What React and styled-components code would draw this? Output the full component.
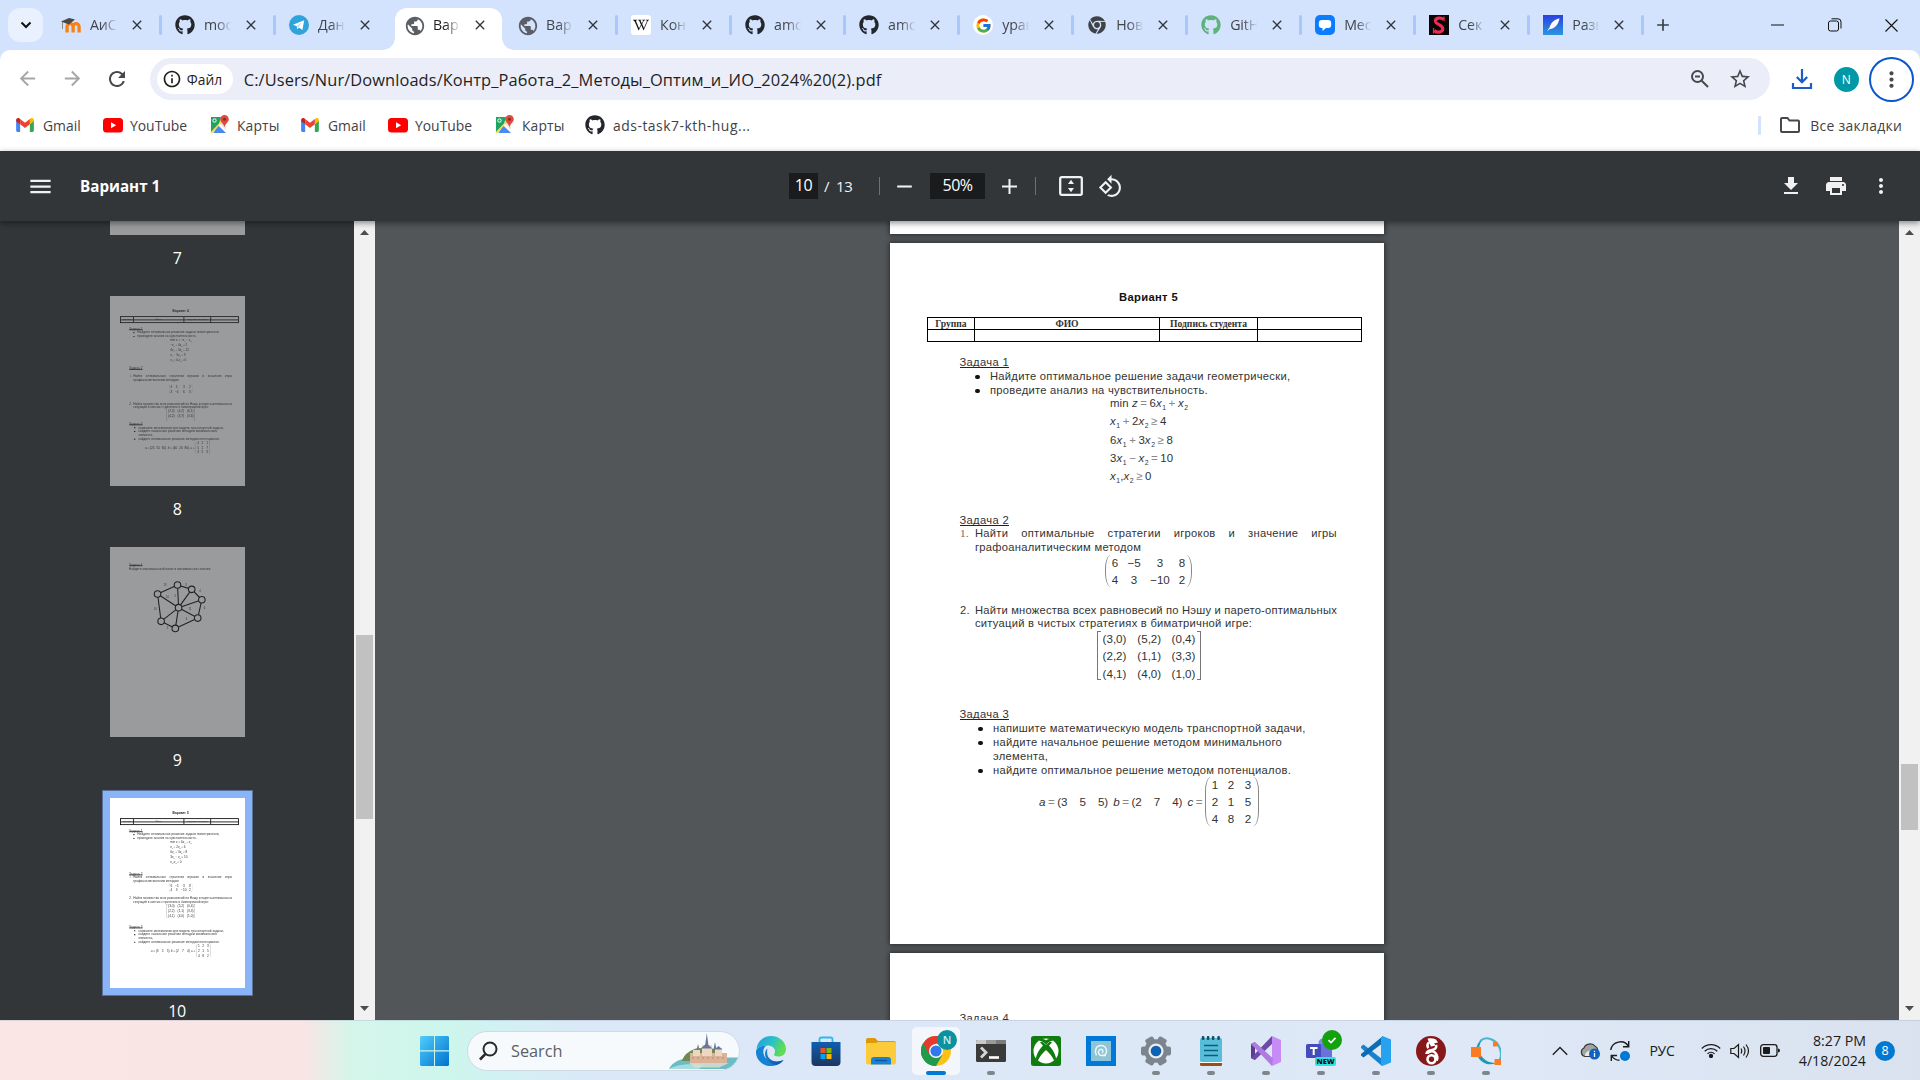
import React from "react";
import styled, { createGlobalStyle, css } from "styled-components";
import { FaGithub, FaChrome, FaWikipediaW } from "react-icons/fa";
import { FcGoogle } from "react-icons/fc";
import {
  MdArrowBack, MdArrowForward, MdRefresh, MdInfoOutline, MdStarBorder,
  MdPublic, MdClose, MdAdd, MdRemove, MdMenu, MdPrint, MdMoreVert,
} from "react-icons/md";

const Global = createGlobalStyle`
  * { box-sizing: border-box; }
  body { margin: 0; overflow: hidden; background: #fff; }
  svg { display: block; flex: none; }
`;

const UI = `"Open Sans", "Noto Sans", sans-serif`;
const DOC = `"Liberation Sans", sans-serif`;

const Screen = styled.div`
  width: 1920px;
  height: 1080px;
  display: flex;
  flex-direction: column;
  overflow: hidden;
  font-family: ${UI};
  color: #1f1f1f;
`;

/* ---------- tab strip ---------- */

const TabStrip = styled.div`
  height: 50px;
  flex: none;
  display: flex;
  align-items: center;
  background: #d3e2fd;
  padding-left: 8px;
`;
const TabSearch = styled.div`
  width: 35px;
  height: 34px;
  margin-right: 5px;
  border-radius: 12px;
  background: #e9f0fe;
  display: grid;
  place-items: center;
`;
const TabBox = styled.div`
  position: relative;
  width: 114.03px;
  height: 50px;
  flex: none;
  display: flex;
  align-items: center;
  padding-left: ${(p) => (p.$active ? 14 : 13)}px;
  &::after {
    content: "";
    margin-left: auto;
    width: 3px;
    height: 20px;
    border-radius: 2px;
    background: ${(p) => (p.$line ? "#a8c7fa" : "transparent")};
  }
  ${(p) =>
    p.$active &&
    css`
      &::before {
        content: "";
        position: absolute;
        left: -7px;
        top: 8px;
        width: 131px;
        height: 42px;
        background:
          radial-gradient(circle at 0 0, transparent 11.5px, #fff 12px) 0 30px / 12px 12px no-repeat,
          radial-gradient(circle at 100% 0, transparent 11.5px, #fff 12px) 119px 30px / 12px 12px no-repeat;
      }
    `}
`;
const TabFill = styled.div`
  position: absolute;
  left: 5px;
  top: 8px;
  width: 107px;
  height: 42px;
  border-radius: 12px 12px 0 0;
  background: #fff;
`;
const Favicon = styled.span`
  position: relative;
  width: 20px;
  height: 20px;
  margin-right: 9px;
  display: grid;
  place-items: center;
  background: ${(p) => p.$bg || "transparent"};
  border-radius: ${(p) => p.$r || 0}px;
`;
const TabTitle = styled.span`
  position: relative;
  width: 28px;
  overflow: hidden;
  white-space: nowrap;
  font-size: 14.2px;
  letter-spacing: -0.1px;
  line-height: 20px;
  color: ${(p) => (p.$active ? "#1f1f1f" : "#41454b")};
  mask-image: linear-gradient(90deg, #000 45%, transparent 98%);
`;
const TabClose = styled.span`
  position: relative;
  margin-left: 11px;
  color: #32363b;
`;
const NewTab = styled.div`
  margin-left: 9px;
  color: #3b3f44;
`;
const WindowButtons = styled.div`
  margin-left: auto;
  display: flex;
  height: 48px;
  align-items: center;
`;
const WindowButton = styled.div`
  width: 57px;
  display: grid;
  place-items: center;
`;

const Moodle = () => (
  <svg width="22" height="20" viewBox="0 0 22 20">
    <path d="M4.5 17V11.2a3 3 0 0 1 6 0V17M10.5 17v-5.800a3 3 0 0 1 6 0V17" transform="translate(1.600 .5)" fill="none" stroke="#f98012" strokeWidth="3.300" />
    <path d="M0 6.500 8 3l6 1.500-6 5z" fill="#4a4846" />
    <path d="M1.500 7v7" stroke="#8c8a87" strokeWidth="1" />
  </svg>
);
const Telegram = () => (
  <svg width="20" height="20" viewBox="0 0 20 20">
    <circle cx="10" cy="10" r="10" fill="#2fa3dc" />
    <path d="M4 9.800 15.200 5.300 13.400 15 9.900 12.500 8.200 14.200 7.800 11.300z" fill="#fff" />
    <path d="M7.800 11.300 13 7.200 9.300 12z" fill="#a9cfe6" />
  </svg>
);
const SAv = () => (
  <svg width="20" height="20" viewBox="0 0 20 20">
    <rect width="20" height="20" fill="#0a0506" />
    <path d="M14.500 4.500C11.500 1.800 6 3 6.500 6.500c.6 3.400 7.500 3.200 7.300 7.500-.2 3.500-5.800 4.300-8.600 1.500" fill="none" stroke="#ee2b55" strokeWidth="3.200" />
    <path d="M15 1.500v4.500M4.500 13v5.500" stroke="#ee2b55" strokeWidth="1.200" />
  </svg>
);
const Feather = () => (
  <svg width="20" height="20" viewBox="0 0 20 20">
    <defs>
      <linearGradient id="fth" x1="0" y1="0" x2="0" y2="1">
        <stop offset="0" stopColor="#2b3fe0" /><stop offset="1" stopColor="#2d96e0" />
      </linearGradient>
    </defs>
    <rect width="20" height="20" fill="url(#fth)" />
    <path d="M16.500 3.500C12 4 8 7.500 6.500 12.500L4 16l3-2c5-.2 8.500-5 9.500-10.500z" fill="#fff" />
  </svg>
);
const Bubble = () => (
  <svg width="20" height="20" viewBox="0 0 20 20">
    <rect width="20" height="20" rx="5" fill="#0a7cff" />
    <path d="M7 5h6a3.200 3.200 0 0 1 3.200 3.200v1.600A3.200 3.200 0 0 1 13 13h-2l-3.500 3V13H7a3.200 3.200 0 0 1-3.200-3.200V8.200A3.200 3.200 0 0 1 7 5z" fill="#fff" />
  </svg>
);

const tabs = [
  { t: "АиС", i: <Moodle />, line: 1 },
  { t: "moo", i: <FaGithub size={20} color="#23272d" />, line: 1 },
  { t: "Дан", i: <Telegram /> },
  { t: "Вар", i: <MdPublic size={22} color="#5b5f65" />, active: 1 },
  { t: "Вар", i: <MdPublic size={22} color="#5b5f65" />, line: 1 },
  { t: "Кон", i: <FaWikipediaW size={16} color="#111" />, bg: "#fff", r: 3, line: 1 },
  { t: "amo", i: <FaGithub size={20} color="#23272d" />, line: 1 },
  { t: "amo", i: <FaGithub size={20} color="#23272d" />, line: 1 },
  { t: "урав", i: <FcGoogle size={17} />, bg: "#fff", r: 10, line: 1 },
  { t: "Нов", i: <FaChrome size={18} color="#3f4348" />, line: 1 },
  { t: "GitH", i: <FaGithub size={20} color="#5eb37a" />, line: 1 },
  { t: "Мес", i: <Bubble />, line: 1 },
  { t: "Сек", i: <SAv />, line: 1 },
  { t: "Разв", i: <Feather />, line: 1 },
];

/* ---------- address bar ---------- */

const Chrome = styled.div`
  height: 101px;
  flex: none;
  background: linear-gradient(#d3e2fd, #d3e2fd) 0 0 / 100% 12px no-repeat;
`;
const ChromeInner = styled.div`
  height: 101px;
  background: #fff;
  border-radius: 10px 10px 0 0;
`;
const AddressRow = styled.div`
  height: 58px;
  display: flex;
  align-items: center;
  padding-left: 16px;
`;
const NavButton = styled.span`
  width: 44.6px;
  height: 24px;
  display: flex;
  color: ${(p) => (p.$on ? "#45484c" : "#a4a6a8")};
`;
const Omnibox = styled.div`
  width: 1620px;
  height: 42px;
  border-radius: 21px;
  background: #ebeef8;
  display: flex;
  align-items: center;
  padding: 0 18px 0 7px;
`;
const Chip = styled.div`
  width: 76px;
  height: 30px;
  border-radius: 15px;
  background: #fff;
  display: flex;
  align-items: center;
  gap: 5px;
  padding-left: 5px;
  font-size: 13.8px;
`;
const Url = styled.div`
  margin-left: 11px;
  font-size: 16.4px;
  letter-spacing: 0.1px;
  white-space: nowrap;
  flex: 1;
`;
const OmniIcons = styled.div`
  display: flex;
  gap: 18px;
  align-items: center;
  color: #45484c;
`;
const DownloadIcon = styled.svg`
  margin-left: 21px;
`;
const Avatar = styled.div`
  width: 25px;
  height: 25px;
  margin-left: 21px;
  border-radius: 50%;
  background: #0097a7;
  color: #fff;
  display: grid;
  place-items: center;
  font-size: 12px;
`;
const MenuRing = styled.div`
  width: 45px;
  height: 45px;
  margin-left: 10px;
  border: 2.5px solid #0b57d0;
  border-radius: 50%;
  display: grid;
  place-items: center;
`;
const Bookmarks = styled.div`
  height: 34px;
  display: flex;
  align-items: center;
  padding: 0 18px 0 16px;
`;
const Bookmark = styled.div`
  width: ${(p) => p.$w}px;
  display: flex;
  align-items: center;
  gap: ${(p) => p.$gap || 8}px;
  font-size: 13.9px;
  letter-spacing: ${(p) => p.$ls || 0}px;
  white-space: nowrap;
  color: #3f4246;
`;
const AllBookmarks = styled(Bookmark)`
  margin-left: auto;
  width: auto;
  &::before {
    content: "";
    width: 3px;
    height: 19px;
    margin-right: 9px;
    background: #d3e2fd;
    border-radius: 1px;
  }
`;

const Gmail = () => (
  <svg width="18" height="14" viewBox="0 0 19 15">
    <path d="M0 2.500V13.500Q0 15 1.500 15H4.300V6.500z" fill="#4285f4" />
    <path d="M19 2.500V13.500Q19 15 17.500 15H14.700V6.500z" fill="#34a853" />
    <path d="M0 2.200C0 .2 2.200-.5 3.600.6L4.300 1.100V6.800L0 3.600z" fill="#c5221f" />
    <path d="M19 2.200C19 .2 16.800-.5 15.400.6L14.700 1.100V6.800L19 3.600z" fill="#fbbc04" />
    <path d="M4.300 1.100 9.500 5 14.700 1.100V6.800L9.500 10.700 4.300 6.800z" fill="#ea4335" />
  </svg>
);
const YouTube = () => (
  <svg width="20" height="15" viewBox="0 0 20 15">
    <rect width="20" height="14.500" rx="3.500" fill="#f00" />
    <path d="M8 4.200 13.200 7.200 8 10.300z" fill="#fff" />
  </svg>
);
const Maps = () => (
  <svg width="19" height="20" viewBox="0 0 19 20">
    <path d="M1 2h15v16H1z" fill="#e8e6df" />
    <path d="M1 2h10L9 9l-8 9z" fill="#1fa463" />
    <path d="M8 10.500 16 18H3.500z" fill="#4a89f3" />
    <path d="M1 18 12 6.500" stroke="#fddc48" strokeWidth="1.800" />
    <path d="M9.500 9.500l7 7.500" stroke="#fff" strokeWidth="1.500" />
    <circle cx="4.500" cy="5.500" r="1.700" fill="none" stroke="#fff" strokeWidth="1" />
    <path d="M14.500 0a4.300 4.300 0 0 1 4.300 4.300c0 3-3.500 4-4.300 8-.8-4-4.300-5-4.300-8A4.300 4.300 0 0 1 14.500 0z" fill="#dd4b3e" />
    <circle cx="14.500" cy="4.300" r="1.500" fill="#8c2a22" />
  </svg>
);

/* ---------- pdf viewer ---------- */

const PdfBar = styled.div`
  position: relative;
  z-index: 2;
  height: 70px;
  flex: none;
  background: #323639;
  color: #f1f1f1;
  display: flex;
  align-items: center;
  box-shadow: 0 2px 6px rgba(0, 0, 0, 0.45);
`;
const BarLeft = styled.div`
  width: 789px;
  display: flex;
  align-items: center;
  padding-left: 27px;
  gap: 26px;
`;
const PdfTitle = styled.span`
  font-size: 15.2px;
  font-weight: 700;
  letter-spacing: 0;
  color: #fff;
`;
const PageField = styled.span`
  width: ${(p) => p.$w}px;
  height: 26px;
  margin-left: ${(p) => p.$ml || 0}px;
  background: #191b1c;
  color: #fff;
  font-size: 16px;
  line-height: 25px;
  text-align: center;
  letter-spacing: -0.5px;
`;
const Total = styled.span`
  width: 56px;
  padding-left: 6px;
  font-size: 15px;
  letter-spacing: -0.4px;
  white-space: nowrap;
`;
const BarLine = styled.span`
  width: 1px;
  height: 18px;
  margin: 0 ${(p) => p.$r}px 0 ${(p) => p.$l}px;
  background: #6d7174;
`;
const PlusIcon = styled.svg`
  margin-left: 16px;
`;
const RotateIcon = styled.svg`
  margin-left: 15px;
`;
const BarRight = styled.div`
  margin-left: auto;
  display: flex;
  gap: 21px;
  padding-right: 27px;
`;
const Body = styled.div`
  height: 799px;
  flex: none;
  display: flex;
`;
const Sidebar = styled.div`
  width: 354px;
  background: #323639;
  overflow: hidden;
  display: flex;
  flex-direction: column;
  align-items: center;
  flex: none;
`;
const ThumbCell = styled.div`
  width: 151px;
  height: 251px;
  flex: none;
  display: flex;
  flex-direction: column;
  align-items: center;
  margin-top: ${(p) => p.$mt || 0}px;
`;
const ThumbFrame = styled.div`
  width: 151px;
  height: 206px;
  flex: none;
  padding: 8px;
  ${(p) => p.$active && "background: #8ab4f8; outline: 1px solid #5a7196; outline-offset: -1px;"}
`;
const ThumbPage = styled.div`
  width: 135px;
  height: 190px;
  overflow: hidden;
  background: #fff;
  opacity: ${(p) => (p.$active ? 1 : 0.5)};
`;
const ThumbScale = styled.div`
  width: 494px;
  height: 696px;
  transform: scale(0.2733);
  transform-origin: 0 0;
`;
const ThumbLabel = styled.div`
  margin-top: 4px;
  font-size: 16px;
  line-height: 22px;
  letter-spacing: -0.4px;
  color: #fff;
`;
const Scrollbar = styled.div`
  width: 21px;
  flex: none;
  background: #f1f1f1;
  display: flex;
  flex-direction: column;
  align-items: center;
  justify-content: space-between;
  padding: 9px 0;
`;
const Track = styled.div`
  width: 17px;
  flex: 1;
  padding-top: ${(p) => p.$top}px;
`;
const Grip = styled.div`
  height: ${(p) => p.$h}px;
  background: #c1c1c1;
`;
const Viewport = styled.div`
  flex: 1;
  background: #525659;
  overflow: hidden;
  padding-left: 515px;
`;
const Sheet = styled.div`
  width: 494px;
  height: ${(p) => p.$h || 701}px;
  margin-bottom: 9px;
  background: #fff;
  box-shadow: 0 0 5px 1px rgba(0, 0, 0, 0.45);
`;

/* ---------- document ---------- */

const Doc = styled.div`
  padding-top: 47px;
  width: 494px;
  font-family: ${DOC};
  font-size: 11.2px;
  color: #333;
`;
const DocTitle = styled.div`
  height: 14px;
  line-height: 14px;
  padding-left: 23px;
  text-align: center;
  font-weight: 700;
  font-size: 11.2px;
  letter-spacing: 0.35px;
  color: #111;
`;
const Grid = styled.div`
  margin: 13px 0 0 37px;
  width: 435px;
  height: 25px;
  display: grid;
  grid-template-columns: 47px 185px 98px 1fr;
  grid-template-rows: 12px 1fr;
  border: ${(p) => (p.$thumb ? 3.6 : 1)}px solid #000;
`;
const Cell = styled.div`
  border-right: ${(p) => (p.$last ? 0 : p.$thumb ? 3.6 : 1)}px solid #000;
  border-bottom: ${(p) => (p.$bottom ? 0 : p.$thumb ? 3.6 : 1)}px solid #000;
  font: 700 9.6px/12px "Liberation Serif", serif;
  text-align: center;
  white-space: nowrap;
`;
const TaskHead = styled.div`
  width: max-content;
  height: 13px;
  line-height: 14px;
  margin: ${(p) => p.$mt}px 0 0 69.5px;
  letter-spacing: 0.32px;
  border-bottom: ${(p) => (p.$thumb ? 3.6 : 1)}px solid #222;
`;
const Item = styled.div`
  display: flex;
  height: ${(p) => p.$h || 14}px;
  line-height: 14px;
  margin-top: ${(p) => p.$mt || 0}px;
  padding-left: ${(p) => p.$x}px;
  white-space: nowrap;
  letter-spacing: ${(p) => (p.$ls === undefined ? 0.27 : p.$ls)}px;
`;
const Mark = styled.span`
  width: 15px;
  flex: none;
  ${(p) => p.$serif && `font-family: "Liberation Serif", serif; color: #666;`}
`;
const Dot = styled.span`
  width: 4.5px;
  height: 4.5px;
  margin: 5.5px 10.5px 0 0;
  border-radius: 50%;
  background: #111;
  flex: none;
`;
const Spread = styled.span`
  width: 362px;
  display: flex;
  justify-content: space-between;
`;
const Formulas = styled.div`
  margin-top: -3px;
  padding-left: 220px;
`;
const Formula = styled.div`
  height: 18.25px;
  line-height: 18px;
  white-space: nowrap;
  font-size: 11.4px;
  letter-spacing: 0.1px;
`;
const Sub = styled.span`
  font-size: 6.8px;
  line-height: 0;
  vertical-align: -3px;
  font-style: normal;
  margin-left: 0.5px;
`;
const Op = styled.span`
  color: #888;
  margin: 0 2.5px;
`;
const MatrixRow = styled.div`
  display: flex;
  align-items: center;
  height: ${(p) => p.$h}px;
  margin-top: ${(p) => p.$mt || 0}px;
  padding-left: ${(p) => p.$x}px;
  white-space: nowrap;
  font-size: 11.6px;
`;
const Matrix = styled.div`
  display: grid;
  grid-template-columns: ${(p) => p.$cols};
  grid-auto-rows: ${(p) => p.$rh}px;
  align-content: center;
  text-align: center;
  line-height: ${(p) => p.$rh}px;
  height: ${(p) => p.$h}px;
  padding: 0 ${(p) => (p.$pr === undefined ? 2 : p.$pr)}px 0 2px;
  border: solid #888;
  border-width: 0 1px;
  border-radius: 6px / 14px;
`;
const PairMatrix = styled(Matrix)`
  border-color: transparent;
  border-radius: 0;
  margin: 0 -7px;
`;
const Bracket = styled.span`
  width: 4px;
  height: 49px;
  border: solid #777;
  border-width: ${(p) => (p.$right ? "1px 1px 1px 0" : "1px 0 1px 1px")};
`;
const Vector = styled.span`
  display: inline-flex;
  justify-content: space-between;
  width: ${(p) => p.$w}px;
  margin-right: 5px;
`;

const x1 = <><i>x</i><Sub>1</Sub></>;
const x2 = <><i>x</i><Sub>2</Sub></>;

const variant5 = {
  title: "Вариант 5",
  gap2: 28,
  formulas: [
    <>min <i>z</i><Op>=</Op>6{x1}<Op>+</Op>{x2}</>,
    <>{x1}<Op>+</Op>2{x2}<Op>≥</Op>4</>,
    <>6{x1}<Op>+</Op>3{x2}<Op>≥</Op>8</>,
    <>3{x1}<Op>−</Op>{x2}<Op>=</Op>10</>,
    <>{x1},{x2}<Op>≥</Op>0</>,
  ],
  m1: ["6", "−5", "3", "8", "4", "3", "−10", "2"],
  m2: ["(3,0)", "(5,2)", "(0,4)", "(2,2)", "(1,1)", "(3,3)", "(4,1)", "(4,0)", "(1,0)"],
  a: ["3", "5", "5"],
  b: ["2", "7", "4"],
  c: ["1", "2", "3", "2", "1", "5", "4", "8", "2"],
  pre: 0, mid: 0, end: 0, vx: 149,
};
const variant4 = {
  ...variant5,
  title: "Вариант 4",
  gap2: 15,
  formulas: [
    <>min <i>z</i><Op>=</Op>−{x1}<Op>−</Op>{x2}</>,
    <>−{x1}<Op>+</Op>4{x2}<Op>≥</Op>2</>,
    <>4{x1}<Op>+</Op>3{x2}<Op>≤</Op>12</>,
    <>{x1}<Op>−</Op>5{x2}<Op>≤</Op>3</>,
    <>{x1}<Op>≥</Op>0,{x2}<Op>≥</Op>0</>,
  ],
  m1: ["4", "5", "3", "2", "3", "−4", "6", "3"],
  m2: ["(2,3)", "(4,2)", "(6,1)", "(4,2)", "(3,7)", "(3,6)"],
  a: ["25", "55", "60"],
  b: ["40", "20", "80"],
  c: ["4", "2", "1", "5", "1", "7", "3", "5", "3"],
  pre: 17, mid: 13, end: -16, vx: 128,
};

function Variant({ d, thumb }) {
  const heads = ["Группа", "ФИО", "Подпись студента", ""];
  return (
    <Doc>
      <DocTitle>{d.title}</DocTitle>
      <Grid $thumb={thumb}>
        {heads.map((h, i) => <Cell key={i} $thumb={thumb} $last={i === 3}>{h}</Cell>)}
        {heads.map((h, i) => <Cell key={i + 4} $thumb={thumb} $last={i === 3} $bottom />)}
      </Grid>
      <TaskHead $mt={13} $thumb={thumb}>Задача 1</TaskHead>
      <Item $x={85} $mt={1}><Dot />Найдите оптимальное решение задачи геометрически,</Item>
      <Item $x={85}><Dot />проведите анализ на чувствительность.</Item>
      <Formulas>
        {d.formulas.map((f, i) => <Formula key={i}>{f}</Formula>)}
      </Formulas>
      <TaskHead $mt={d.gap2} $thumb={thumb}>Задача 2</TaskHead>
      <Item $x={70} $mt={d.pre}>
        <Mark $serif>1.</Mark>
        <Spread>{"Найти оптимальные стратегии игроков и значение игры".split(" ").map((w) => <span key={w}>{w}</span>)}</Spread>
      </Item>
      <Item $x={85}>графоаналитическим методом</Item>
      <MatrixRow $h={32} $x={215} $mt={1 + d.pre / 2}>
        <Matrix $cols="14px 24px 28px 16px" $rh={17} $h={32} $pr={1}>{d.m1.map((v, i) => <span key={i}>{v}</span>)}</Matrix>
      </MatrixRow>
      <Item $x={70} $mt={16 + d.mid} $h={13} $ls={0.2}><Mark>2.</Mark>Найти множества всех равновесий по Нэшу и парето-оптимальных</Item>
      <Item $x={85} $ls={0.25}>ситуаций в чистых стратегиях в биматричной игре:</Item>
      <MatrixRow $h={49 + d.end} $x={207} $mt={1}>
        <Bracket />
        <PairMatrix $cols="35px 34.5px 34px" $rh={17.5} $h={49}>
          {d.m2.map((v, i) => <span key={i}>{v}</span>)}
        </PairMatrix>
        <Bracket $right />
      </MatrixRow>
      <TaskHead $mt={27 - (d.mid ? 14 : 0)} $thumb={thumb}>Задача 3</TaskHead>
      <Item $x={88} $mt={1}><Dot />напишите математическую модель транспортной задачи,</Item>
      <Item $x={88}><Dot />найдите начальное решение методом минимального</Item>
      <Item $x={103}>элемента,</Item>
      <Item $x={88}><Dot />найдите оптимальное решение методом потенциалов.</Item>
      <MatrixRow $h={49} $x={d.vx}>
        <i>a</i><Op>=</Op>
        <Vector $w={d.pre ? 60 : 51}><span>({d.a[0]}</span><span>{d.a[1]}</span><span>{d.a[2]})</span></Vector>
        <i>b</i><Op>=</Op>
        <Vector $w={d.pre ? 60 : 51}><span>({d.b[0]}</span><span>{d.b[1]}</span><span>{d.b[2]})</span></Vector>
        <i>c</i><Op>=</Op>
        <Matrix $cols="14px 18px 16px" $rh={17.3} $h={49}>{d.c.map((v, i) => <span key={i}>{v}</span>)}</Matrix>
      </MatrixRow>
    </Doc>
  );
}

const GraphPage = styled(Doc)`
  padding-top: 57px;
`;
const nodes = [[174, 172], [247, 139], [299, 155], [336, 193], [321, 260], [239, 298], [187, 272]];
const hub = [251, 222];
const weights = [
  ["13", 196, 142], ["3", 275, 142], ["4", 327, 164], ["6", 343, 226], ["4", 277, 268],
  ["5", 208, 300], ["10", 160, 232], ["10", 205, 188], ["5", 236, 184], ["11", 288, 232],
];
function GraphDoc() {
  return (
    <GraphPage>
      <TaskHead $mt={0} $thumb>Задача 4</TaskHead>
      <Item $x={69} $mt={2}>Найдите максимальный поток и минимальное сечение</Item>
      <svg width="494" height="250" viewBox="0 86 494 250" fill="none" stroke="#111" strokeWidth="4">
        {nodes.map((n, i) => {
          const m = nodes[(i + 1) % nodes.length];
          return <path key={i} d={`M${n[0]} ${n[1]}L${m[0]} ${m[1]}M${n[0]} ${n[1]}L${hub[0]} ${hub[1]}`} />;
        })}
        {[...nodes, hub].map((n, i) => <circle key={i} cx={n[0]} cy={n[1]} r="12" fill="#fff" />)}
        {weights.map(([t, x, y], i) => <text key={i} x={x} y={y} fontSize="10" fill="#333" stroke="none">{t}</text>)}
      </svg>
    </GraphPage>
  );
}

function Thumb({ n, active, children, mt }) {
  return (
    <ThumbCell $mt={mt}>
      <ThumbFrame $active={active}>
        <ThumbPage $active={active}><ThumbScale>{children}</ThumbScale></ThumbPage>
      </ThumbFrame>
      <ThumbLabel>{n}</ThumbLabel>
    </ThumbCell>
  );
}

const Arrow = ({ down }) => (
  <svg width="9" height="5" viewBox="0 0 9 5">
    <path d={down ? "M0 0h9L4.500 5z" : "M0 5h9L4.500 0z"} fill="#4d4d4d" />
  </svg>
);

/* ---------- taskbar ---------- */

const Taskbar = styled.div`
  height: 60px;
  flex: none;
  display: flex;
  align-items: center;
  padding-left: 420px;
  border-top: 1px solid rgba(160, 175, 195, 0.35);
  background: linear-gradient(90deg, #f9e6e5 0, #f8e5e4 305px, #d5f5ea 350px, #cdf6ec 450px, #d2f1f3 500px, #dbe8f7 590px, #dee8f6 1500px, #dae2ef 1920px);
`;
const SearchBox = styled.div`
  width: 273px;
  height: 40px;
  margin: 0 7px 0 18px;
  border: 1px solid #cfdae3;
  border-radius: 20px;
  background: #f6fafd;
  display: flex;
  align-items: center;
  padding-left: 11px;
  font-size: 16.3px;
  color: #5c6064;
  overflow: hidden;
`;
const SearchText = styled.span`
  margin-left: 13px;
  flex: 1;
`;
const AppSlot = styled.div`
  position: relative;
  width: 48px;
  height: 48px;
  margin-right: 7px;
  flex: none;
  border-radius: 5px;
  display: grid;
  place-items: center;
  background: ${(p) => (p.$active ? "rgba(255,255,255,.65)" : "transparent")};
  ${(p) =>
    p.$run &&
    css`
      &::after {
        content: "";
        position: absolute;
        bottom: 0;
        left: ${p.$active ? 14 : 20}px;
        width: ${p.$active ? 20 : 8}px;
        height: 4px;
        border-radius: 2px;
        background: ${p.$active ? "#0078d4" : "#7f858b"};
      }
    `}
`;
const Badge = styled.span`
  position: absolute;
  left: 25px;
  top: 3px;
  width: 20px;
  height: 20px;
  border-radius: 50%;
  display: grid;
  place-items: center;
  background: ${(p) => p.$bg};
  color: #c9eef2;
  font-size: 11px;
  font-weight: 600;
`;
const NewTag = styled.span`
  position: absolute;
  left: 18px;
  top: 30px;
  width: 21px;
  height: 9px;
  border-radius: 2px;
  background: #2ce3e3;
  color: #111;
  font: 800 7.500px/9px ${UI};
  text-align: center;
`;
const Tray = styled.div`
  margin-left: auto;
  display: flex;
  align-items: center;
  padding-right: 25px;
  color: #1b1b1b;
`;
const TrayItem = styled.span`
  margin-right: ${(p) => p.$mr}px;
  font-size: 14px;
  letter-spacing: -0.3px;
`;
const Clock = styled.div`
  width: 76px;
  margin-right: 9px;
  text-align: right;
  white-space: nowrap;
  font-size: 14.2px;
  line-height: 20px;
`;
const Count = styled.div`
  width: 20px;
  height: 20px;
  border-radius: 50%;
  background: #0078d4;
  color: #fff;
  font-size: 12.5px;
  display: grid;
  place-items: center;
`;

const Ico = ({ children }) => <svg width="30" height="30" viewBox="0 0 30 30">{children}</svg>;

const Castle = () => (
  <svg width="70" height="38" viewBox="0 0 70 38">
    <path d="M0 37C3 30 12 26 24 25.500H69V30Q66 37 58 37z" fill="#6cbcc6" />
    <path d="M0 37C6 33 20 31 34 33L30 37z" fill="#a7dbe2" />
    <path d="M13 29C15 22 21 18 29 16L50 17 58 29z" fill="#6d8a55" />
    <path d="M21 21H58V31H21z" fill="#d9b297" />
    <path d="M24 18h7v6h-7zM33 13h10v11H33zM46 16h7v8h-7z" fill="#eed6c1" />
    <path d="M37.800 1 39.600 14h-3.600zM29 12l1.500 6h-3zM46 10l1.500 7h-3z" fill="#6b7b99" />
    <path d="M31.500 16.500l6-5 6 5zM45.500 17.500l4-3.500 4 3.500z" fill="#69779a" />
    <path d="M23 26h33" stroke="#b88a6e" strokeWidth="1.200" strokeDasharray="2 3" />
    <path d="M20 31H60L50 35.500H26z" fill="#dfe0d0" opacity=".8" />
  </svg>
);

const EdgeI = () => (
  <Ico>
    <defs>
      <linearGradient id="e1" x1="0" y1="0" x2="1" y2=".4"><stop offset="0" stopColor="#1e9de0" /><stop offset=".55" stopColor="#2cc0c8" /><stop offset="1" stopColor="#62dd50" /></linearGradient>
      <linearGradient id="e2" x1="0" y1="0" x2="1" y2="1"><stop offset="0" stopColor="#1b8fdc" /><stop offset="1" stopColor="#0c4f9e" /></linearGradient>
    </defs>
    <path d="M.5 13C1.500 5 7.500 0 15 0c9 0 15 6.500 15 13 0 5-3.500 7.500-7.500 7.500-3 0-4.500-1-4.500-2 0-.8 1-1.200 1-3.300 0-3-3-5.700-7.500-5.700C6 9.500 2 11 .5 13z" fill="url(#e1)" />
    <path d="M0 15.500C.3 12 5 9.500 11 9.500c-3.500 1.500-4 5-3.500 8C8.500 23 14 26 19 26c4 0 6.500-1 8.500-2C25 27.500 20.500 30 15 30 6 30-.3 23.500 0 15.500z" fill="#1483d4" />
    <path d="M11.500 12.500C8 15 8.500 20 11 23.500c2.500 3.300 6 5.500 9.500 5.500 3-1 5.500-3 7-5-7 3-14.500 1-16-5-.5-2.500-.5-4.500 0-6.500z" fill="url(#e2)" />
  </Ico>
);
const StoreI = () => (
  <Ico>
    <defs><linearGradient id="st" x1="0" y1="0" x2="0" y2="1"><stop offset="0" stopColor="#0f5fb0" /><stop offset="1" stopColor="#1c3560" /></linearGradient></defs>
    <path d="M8.500 7V3.500Q8.500 1.500 10.500 1.500h9Q21.500 1.500 21.500 3.500V7" fill="none" stroke="#2fb7ee" strokeWidth="1.800" />
    <path d="M.5 6h29v20q0 4-4 4h-21q-4 0-4-4z" fill="url(#st)" />
    <path d="M9.500 12h5v5h-5z" fill="#f25022" /><path d="M15.500 12h5v5h-5z" fill="#7fba00" />
    <path d="M9.500 18h5v5h-5z" fill="#00a4ef" /><path d="M15.500 18h5v5h-5z" fill="#ffb900" />
  </Ico>
);
const FolderI = () => (
  <Ico>
    <path d="M0 4q0-2 2-2h7l3 3H28q2 0 2 2v3H0z" fill="#dc9a06" />
    <path d="M0 8.500Q0 7 1.500 7H10l2-1H28.500Q30 6 30 7.500V26.500Q30 28.500 28 28.500H2Q0 28.500 0 26.500z" fill="#fccb3b" />
    <path d="M5 28.500V24q0-3 3-3H22q3 0 3 3v4.500z" fill="#1583d8" /><path d="M9 24.500h12" stroke="#0d5597" strokeWidth="1.300" />
  </Ico>
);
const ChromeI = () => (
  <Ico>
    <circle cx="15" cy="15" r="15" fill="#fbc116" />
    <path d="M15 15 2 7.500A15 15 0 0 0 15 30l6.500-11.300z" fill="#229a4b" />
    <path d="M2 7.500A15 15 0 0 1 28 7.500H15L8.500 18.800z" fill="#e33b2e" />
    <path d="M2 7.500 8.500 18.800 15 30A15 15 0 0 1 2 7.500z" fill="#229a4b" />
    <circle cx="15" cy="15" r="7" fill="#fff" /><circle cx="15" cy="15" r="5.600" fill="#3079ea" />
  </Ico>
);
const TerminalI = () => (
  <Ico>
    <rect y="4" width="30" height="22" rx="1.500" fill="#3a3a3a" /><path d="M0 8V5.500Q0 4 1.500 4H10V8z" fill="#c9c9c9" /><path d="M10 4H20V8H10z" fill="#9a9a9a" /><path d="M20 4h8.500Q30 4 30 5.500V8H20z" fill="#7b7b7b" />
    <path d="M5 11.500l5 5-5 5" fill="none" stroke="#d6d6d6" strokeWidth="2.800" /><path d="M13 21.500h10" stroke="#fff" strokeWidth="2.600" />
  </Ico>
);
const XboxI = () => (
  <Ico>
    <rect width="30" height="30" rx="2.500" fill="#107c10" /><circle cx="15" cy="15" r="12.500" fill="#fff" />
    <path d="M15 8.500C12.500 6 9.500 4.300 7.500 5L9 3.500C13 2 15 4.500 15 4.500S17 2 21 3.500L22.500 5C20.500 4.300 17.500 6 15 8.500z" fill="#107c10" />
    <path d="M4.800 22.800C5.500 18.500 8.500 13 12 9.500L9 6.500 11 5.500 15 8.800 19 5.500 21 6.500 18 9.500C21.500 13 24.500 18.500 25.200 22.800L23.200 24.800C21.500 20.800 18 16.500 15 14 12 16.500 8.500 20.800 6.800 24.800z" fill="#107c10" />
  </Ico>
);
const BlueI = () => (
  <Ico>
    <rect width="30" height="30" fill="#0078d7" /><rect x="5" y="5" width="20" height="20" fill="#8fc4d6" />
    <path d="M10.500 19.500C8 15 10 9.500 15 9.500c4 0 5.500 3 5.500 5.500 0 3-2 4.500-4.500 4.500s-4-2-3.500-4 2-2.500 3.300-2 1.500 2.500.2 3.500M20 19.500h-5" fill="none" stroke="#e9f7fb" strokeWidth="1.500" />
  </Ico>
);
const GearI = () => (
  <Ico>
    <g fill="#7c858d">
      <circle cx="15" cy="15" r="11.800" />
      {[30, 90, 150, 210, 270, 330].map((a) => <rect key={a} x="10.500" y="0" width="9" height="8" rx="2" transform={`rotate(${a} 15 15)`} />)}
    </g>
    <circle cx="15" cy="15" r="7.600" fill="#e8edf2" /><circle cx="15" cy="15" r="5.300" fill="#1161b3" />
  </Ico>
);
const NoteI = () => (
  <Ico>
    <rect x="4" y="24" width="22" height="6" rx="1.500" fill="#9a4f10" /><rect x="4" y="22" width="22" height="5" fill="#fff" />
    <rect x="4" y="2" width="22" height="24" rx="1.500" fill="#58bdd8" />
    <path d="M8 9.500h14M8 14.500h14M8 19.500h14" stroke="#0b5d7c" strokeWidth="1.600" />
    {[7, 12, 17, 22.500].map((x) => <rect key={x} x={x - 1.200} y="0" width="2.600" height="4" rx="1" fill="#134f66" />)}
  </Ico>
);
const VSI = () => (
  <Ico>
    <path d="M0 8 4 6V24L0 22z" fill="#5c3a91" />
    <path d="M0 22 4 24 22 7 21 0z" fill="#6e4aa8" /><path d="M21 0 30 4V26L21 30z" fill="#c68bf5" /><path d="M0 8 4 6 22 22.500 21 30z" fill="#ae7ce0" />
  </Ico>
);
const TeamsI = () => (
  <Ico>
    <circle cx="17" cy="7" r="4.500" fill="#8088ea" /><rect x="12" y="8" width="14" height="17" rx="3" fill="#6a72da" /><rect x="0" y="8" width="15" height="14" rx="1.500" fill="#444bbc" />
    <path d="M4 12h7.500M7.700 12v7" stroke="#fff" strokeWidth="2" />
  </Ico>
);
const CodeI = () => (
  <Ico>
    <path d="M0 10.500 2.500 8.500 21 23V30L0 12z" fill="#1583ce" /><path d="M0 19.500 2.500 21.500 22 7V0L0 18z" fill="#0c6cb3" />
    <path d="M21.500 0 30 3.500V26.500L21.500 30 20 28V2z" fill="#27a2ee" />
  </Ico>
);
const WireI = () => (
  <Ico>
    <circle cx="15" cy="15" r="15" fill="#88171a" />
    <path d="M20 9c1 3-1 4.500-4 5s-5.500 1.500-5.500 4M19 17.500c2.500 1.500 3 4.500 1.500 7M12.500 12c-1.500-1.500-1.500-4 .5-5.500" fill="none" stroke="#fff" strokeWidth="2.600" />
    <circle cx="15.500" cy="23.300" r="4" fill="none" stroke="#fff" strokeWidth="2.600" />
    <path d="M11.500 17.500c1-2 5-3 7.500-1s1.500 4-1 5" fill="none" stroke="#fff" strokeWidth="2.400" />
    <path d="M11.500 2.500q4.500-1 8.500 1l2 3-4 1 2 2-5 1-2-4z" fill="#fff" />
  </Ico>
);
const OrbitI = () => (
  <Ico>
    <path d="M14 2.500C6 4 3 14 7 21s12 9 18 6c-8 0-14-4-16-10S9 5 14 2.500z" fill="#2297b5" />
    <path d="M9 5C16-1 29 4 30 18c0 5-2 8-5 10" fill="none" stroke="#49b5cf" strokeWidth="2" />
    <rect x="0" y="11" width="10" height="10" fill="#f97b22" /><rect x="22" y="6" width="4.500" height="4.500" fill="#f97b22" /><rect x="23.500" y="23" width="6.500" height="6" fill="#f97b22" />
  </Ico>
);

const apps = [
  { i: <EdgeI /> }, { i: <StoreI /> }, { i: <FolderI /> },
  { i: <ChromeI />, active: 1, run: 1, over: <Badge $bg="#0a929f">N</Badge> },
  { i: <TerminalI />, run: 1 }, { i: <XboxI /> }, { i: <BlueI /> },
  { i: <GearI />, run: 1 }, { i: <NoteI />, run: 1 }, { i: <VSI />, run: 1 },
  {
    i: <TeamsI />, run: 1,
    over: (
      <>
        <Badge $bg="#13a10e"><svg width="12" height="12" viewBox="0 0 12 12"><path d="M2.500 6.200 5 8.600 9.500 3.800" fill="none" stroke="#fff" strokeWidth="1.700" /></svg></Badge>
        <NewTag>NEW</NewTag>
      </>
    ),
  },
  { i: <CodeI />, run: 1 }, { i: <WireI />, run: 1 }, { i: <OrbitI />, run: 1 },
];

export default function App() {
  return (
    <Screen>
      <Global />
      <TabStrip>
        <TabSearch>
          <svg width="12" height="8" viewBox="0 0 12 8"><path d="M1.500 1.500 6 6l4.500-4.500" fill="none" stroke="#111" strokeWidth="2" /></svg>
        </TabSearch>
        {tabs.map((t, i) => (
          <TabBox key={i} $active={t.active} $line={t.line}>
            {t.active && <TabFill />}
            <Favicon $bg={t.bg} $r={t.r}>{t.i}</Favicon>
            <TabTitle $active={t.active}>{t.t}</TabTitle>
            <TabClose><MdClose size={16} /></TabClose>
          </TabBox>
        ))}
        <NewTab><MdAdd size={20} /></NewTab>
        <WindowButtons>
          <WindowButton><svg width="13" height="2"><path d="M0 1h13" stroke="#111" /></svg></WindowButton>
          <WindowButton>
            <svg width="14" height="14" viewBox="0 0 14 14" fill="none" stroke="#111">
              <rect x=".5" y="3" width="10" height="10" rx="2" /><path d="M3.500.8H10Q13 .8 13 4v6.500" />
            </svg>
          </WindowButton>
          <WindowButton><svg width="13" height="13" viewBox="0 0 13 13"><path d="M.5.5l12 12M12.500.5l-12 12" stroke="#111" strokeWidth="1.100" /></svg></WindowButton>
        </WindowButtons>
      </TabStrip>

      <Chrome>
        <ChromeInner>
          <AddressRow>
            <NavButton><MdArrowBack size={23} /></NavButton>
            <NavButton><MdArrowForward size={23} /></NavButton>
            <NavButton $on><MdRefresh size={24} /></NavButton>
            <Omnibox>
              <Chip><MdInfoOutline size={20} /> Файл</Chip>
              <Url>C:/Users/Nur/Downloads/Контр_Работа_2_Методы_Оптим_и_ИО_2024%20(2).pdf</Url>
              <OmniIcons>
                <svg width="20" height="20" viewBox="0 0 20 20" fill="none" stroke="#45484c" strokeWidth="2">
                  <circle cx="7.500" cy="7.500" r="5.500" /><path d="M11.700 11.700 18 18M5 7.500h5" />
                </svg>
                <MdStarBorder size={24} />
              </OmniIcons>
            </Omnibox>
            <DownloadIcon width="22" height="22" viewBox="0 0 22 22" fill="none" stroke="#1a5dc4" strokeWidth="2.200">
              <path d="M11 1v13M5.800 9 11 14.200 16.200 9M2 15v5h18v-5" />
            </DownloadIcon>
            <Avatar>N</Avatar>
            <MenuRing><MdMoreVert size={25} color="#45484c" /></MenuRing>
          </AddressRow>
          <Bookmarks>
            <Bookmark $w={87} $gap={9}><Gmail />Gmail</Bookmark>
            <Bookmark $w={107} $gap={7}><YouTube />YouTube</Bookmark>
            <Bookmark $w={91} $ls={0.1}><Maps />Карты</Bookmark>
            <Bookmark $w={87} $gap={9}><Gmail />Gmail</Bookmark>
            <Bookmark $w={107} $gap={7}><YouTube />YouTube</Bookmark>
            <Bookmark $w={90} $ls={0.1}><Maps />Карты</Bookmark>
            <Bookmark $w={190} $ls={0.52}><FaGithub size={20} color="#23272d" />ads-task7-kth-hug...</Bookmark>
            <AllBookmarks $gap={9} $ls={0.28}>
              <svg width="22" height="18" viewBox="0 0 22 18"><path d="M2 3Q2 2 3 2H8.500l2 2.500H19q1 0 1 1V15q0 1-1 1H3q-1 0-1-1z" fill="none" stroke="#45484c" strokeWidth="2" /></svg>
              Все закладки
            </AllBookmarks>
          </Bookmarks>
        </ChromeInner>
      </Chrome>

      <PdfBar>
        <BarLeft><MdMenu size={27} /><PdfTitle>Вариант 1</PdfTitle></BarLeft>
        <PageField $w={29}>10</PageField>
        <Total>/ &nbsp;13</Total>
        <BarLine $l={5} $r={12} />
        <MdRemove size={25} />
        <PageField $w={55} $ml={13}>50%</PageField>
        <PlusIcon width="17" height="17" viewBox="0 0 17 17"><path d="M8.500 1v15M1 8.500h15" stroke="#f1f1f1" strokeWidth="2" /></PlusIcon>
        <BarLine $l={17} $r={23} />
        <svg width="24" height="20" viewBox="0 0 24 20">
          <rect x="1.200" y="1.200" width="21.600" height="17.600" rx="1.500" fill="none" stroke="#f1f1f1" strokeWidth="2.300" />
          <path d="M12 3.800 15 8H9zM12 16.200 15 12H9z" fill="#f1f1f1" />
        </svg>
        <RotateIcon width="25" height="25" viewBox="0 0 24 24">
          <path fill="#f1f1f1" d="M7.340 6.410L.860 12.900l6.490 6.480 6.490-6.480-6.500-6.490zM3.690 12.900l3.660-3.660L11 12.900l-3.660 3.660-3.650-3.660zm15.670-6.260C17.610 4.880 15.300 4 13 4V.760L8.760 5 13 9.240V6c1.790 0 3.580.680 4.950 2.050 2.730 2.730 2.730 7.170 0 9.900C16.580 19.320 14.790 20 13 20c-.970 0-1.940-.210-2.840-.610l-1.490 1.490C10.020 21.620 11.510 22 13 22c2.300 0 4.610-.880 6.360-2.640 3.520-3.510 3.520-9.210 0-12.720z" />
        </RotateIcon>
        <BarRight>
          <svg width="24" height="24" viewBox="0 0 24 24"><path d="M19 9h-4V3H9v6H5l7 7 7-7zM5 18v2h14v-2H5z" fill="#f1f1f1" /></svg>
          <MdPrint size={24} />
          <MdMoreVert size={24} />
        </BarRight>
      </PdfBar>

      <Body>
        <Sidebar>
          <Thumb n="7" mt={-184} />
          <Thumb n="8"><Variant d={variant4} thumb /></Thumb>
          <Thumb n="9"><GraphDoc /></Thumb>
          <Thumb n="10" active><Variant d={variant5} thumb /></Thumb>
        </Sidebar>
        <Scrollbar><Arrow /><Track $top={400}><Grip $h={184} /></Track><Arrow down /></Scrollbar>
        <Viewport>
          <Sheet $h={13} />
          <Sheet><Variant d={variant5} /></Sheet>
          <Sheet>
            <GraphPage><TaskHead $mt={1}>Задача 4</TaskHead></GraphPage>
          </Sheet>
        </Viewport>
        <Scrollbar><Arrow /><Track $top={529}><Grip $h={66} /></Track><Arrow down /></Scrollbar>
      </Body>

      <Taskbar>
        <svg width="29" height="30" viewBox="0 0 29 30">
          <defs><linearGradient id="win" x1="0" y1="0" x2="1" y2="1"><stop offset="0" stopColor="#50cdfb" /><stop offset="1" stopColor="#0072d0" /></linearGradient></defs>
          <path d="M1 0H14V14.300H0V1zM15 0H28L29 1V14.300H15zM0 15.400H14V30H1L0 29zM15 15.400H29V29L28 30H15z" fill="url(#win)" />
        </svg>
        <SearchBox>
          <svg width="19" height="20" viewBox="0 0 19 20" fill="none" stroke="#2a2a2a" strokeWidth="2"><circle cx="11" cy="8" r="6.500" /><path d="M6.500 12.800 1 18.500" strokeWidth="2.600" /></svg>
          <SearchText>Search</SearchText>
          <Castle />
        </SearchBox>
        {apps.map((a, i) => (
          <AppSlot key={i} $active={a.active} $run={a.run}>{a.i}{a.over}</AppSlot>
        ))}
        <Tray>
          <TrayItem $mr={12}><svg width="16" height="10" viewBox="0 0 16 10"><path d="M.8 8.800 8 1.500l7.200 7.300" fill="none" stroke="#1b1b1b" strokeWidth="1.300" /></svg></TrayItem>
          <TrayItem $mr={10}>
            <svg width="20" height="18" viewBox="0 0 20 18">
              <path d="M5 14.500a4.500 4.500 0 0 1-1-8.500C5 2 12 0 15.500 4.500 19 6 18 14.500 14 14.500z" fill="#a3a3a3" stroke="#3a3a3a" strokeWidth="1.200" />
              <path d="M5 14q0-5 6-5.500L10 14z" fill="#e8e8e8" /><circle cx="14.500" cy="12" r="5.500" fill="#0f62bd" /><path d="M14.500 11v4M14.500 8.700v1.300" stroke="#fff" strokeWidth="1.300" />
            </svg>
          </TrayItem>
          <TrayItem $mr={20}>
            <svg width="20" height="20" viewBox="0 0 20 20" fill="none" stroke="#1b1b1b" strokeWidth="1.400">
              <path d="M.7 9C2 .5 14-2.500 18.500 5.500M18.700 0v5.800H13M1.300 20v-5.500H7M1.500 14.500C3.500 18 6 19.300 9.500 19.300" /><circle cx="15" cy="15" r="5" fill="#0078d4" stroke="none" />
            </svg>
          </TrayItem>
          <TrayItem $mr={26}>РУС</TrayItem>
          <TrayItem $mr={9.500}>
            <svg width="20" height="15" viewBox="0 0 20 15" fill="none" stroke="#1b1b1b" strokeWidth="1.300">
              <path d="M.8 5.500a13 13 0 0 1 18.400 0M3.700 8.200a9 9 0 0 1 12.600 0M6.500 10.900a5 5 0 0 1 7 0" /><circle cx="10" cy="13" r="1.500" fill="#1b1b1b" />
            </svg>
          </TrayItem>
          <TrayItem $mr={10}>
            <svg width="20" height="16" viewBox="0 0 20 16" fill="none" stroke="#1b1b1b" strokeWidth="1.200">
              <path d="M.8 5.500H4L8.500 1.500v13L4 10.500H.8zM11 5.500q1.500 2.500 0 5M13.500 3.500q3 4.500 0 9M16 1.500q5 6.500 0 13" />
            </svg>
          </TrayItem>
          <TrayItem $mr={10}>
            <svg width="20" height="13" viewBox="0 0 20 13"><rect x=".7" y=".7" width="16.300" height="11.600" rx="2.500" fill="none" stroke="#1b1b1b" strokeWidth="1.300" /><rect x="3" y="3" width="7" height="7" rx="1" fill="#1b1b1b" /><path d="M18 4.500q2 0 2 2t-2 2z" fill="#1b1b1b" /></svg>
          </TrayItem>
          <Clock>8:27 PM<br />4/18/2024</Clock>
          <Count>8</Count>
        </Tray>
      </Taskbar>
    </Screen>
  );
}
